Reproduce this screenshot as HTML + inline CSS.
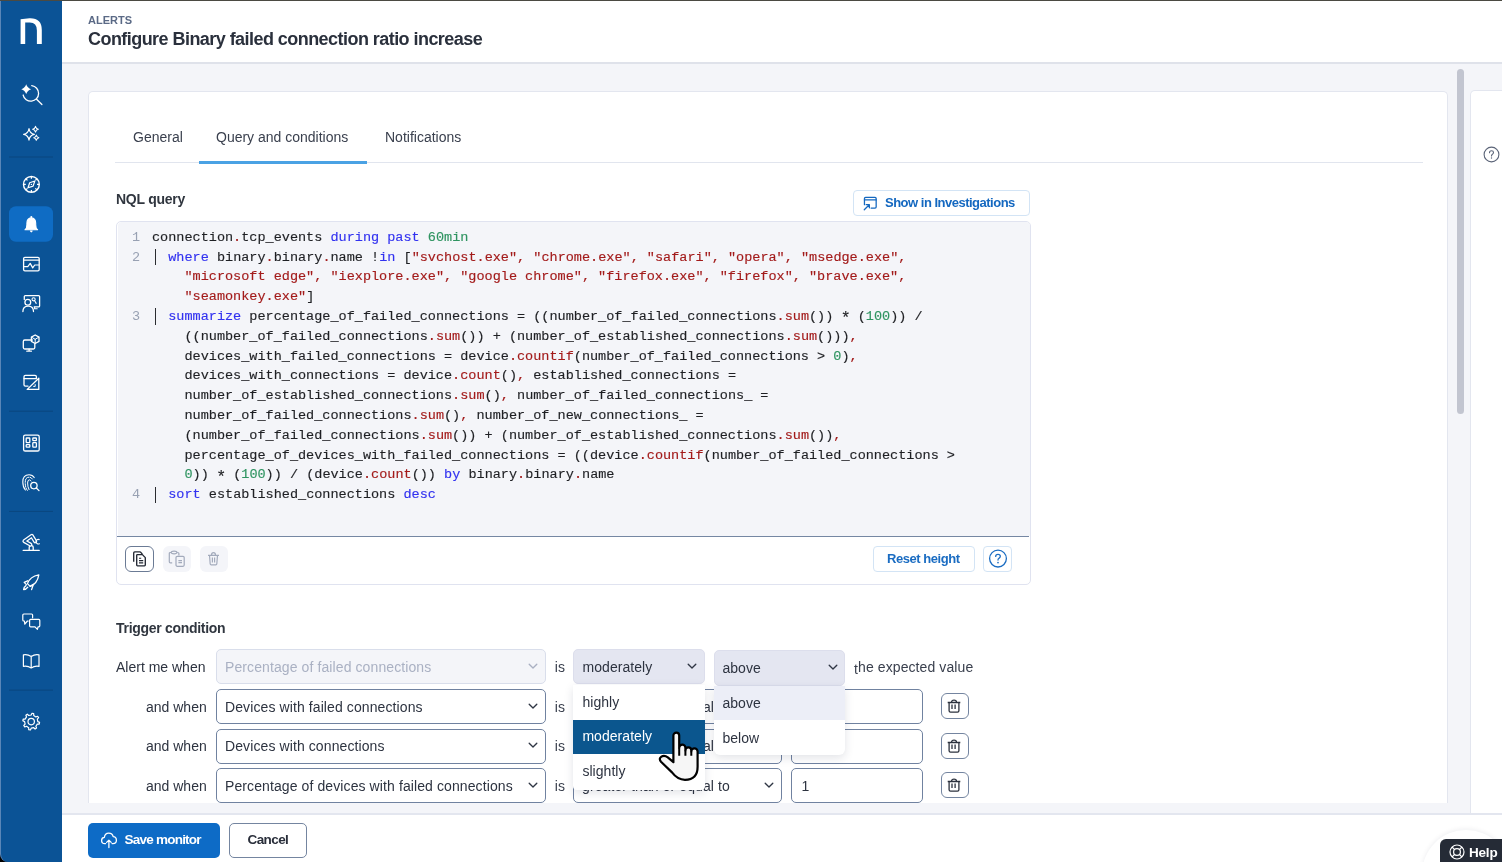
<!DOCTYPE html>
<html><head><meta charset="utf-8">
<style>
*{box-sizing:border-box;margin:0;padding:0}
body{will-change:transform}html,body{width:1502px;height:862px;overflow:hidden;background:#f4f5f9;font-family:"Liberation Sans",sans-serif;color:#222834}
.a{position:absolute}
#top{left:0;top:0;width:1502px;height:1px;background:#4b4a42;z-index:50}
#side{left:0;top:0;width:62px;height:862px;background:#0b5396;border-left:1px solid #5a86b8}
#corner{left:0;top:842px;width:20px;height:20px;background:#000;z-index:1}
#side2{left:0;top:0;width:62px;height:862px;background:#0b5396;border-left:1px solid #5a86b8;border-bottom-left-radius:8px;z-index:2}
#hdr{left:62px;top:1px;width:1440px;height:63px;background:#fff;border-bottom:2px solid #dfe2ea}
.t{white-space:nowrap;position:absolute}
#card{left:88px;top:91px;width:1359.5px;height:712px;background:#fff;border:1px solid #e3e6ef;border-radius:5px;border-bottom:none;border-bottom-left-radius:0;border-bottom-right-radius:0}
#foot{left:62px;top:813px;width:1440px;height:49px;background:#fff;border-top:2px solid #e3e6ef}
#rpanel{left:1470px;top:90px;width:40px;height:724px;background:#fff;border:1px solid #e3e6ef;border-radius:5px 0 0 0;border-bottom:none}
#thumb{left:1457px;top:69px;width:7px;height:345px;background:#c2c5d0;border-radius:4px}
.ln{position:absolute;left:124px;width:16px;text-align:right;font-family:"Liberation Mono",monospace;font-size:13.53px;line-height:19.8px;color:#98a1b3;white-space:pre}
.cl{position:absolute;left:152px;font-family:"Liberation Mono",monospace;font-size:13.53px;line-height:19.8px;color:#1f2024;white-space:pre;-webkit-text-stroke:0.15px currentColor}
.p{display:inline-block;width:8.12px;height:19.8px;position:relative;vertical-align:top}
.p::after{content:"";position:absolute;left:2.8px;top:1.6px;width:1.6px;height:16.4px;background:#2a2c30}
.s{display:inline-block;width:8.12px;text-align:center;position:relative;top:3.6px;left:-0.8px;font-size:16.5px;line-height:10px}
.k{color:#3232f0}.r{color:#a31b1b}.n{color:#2f9461}
</style></head><body>
<div id="top" class="a"></div>
<div id="corner" class="a"></div>
<div id="side2" class="a"></div>

<!-- sidebar icons -->
<svg class="a" style="left:0;top:0;z-index:3" width="62" height="862" viewBox="0 0 62 862" fill="none" stroke="#fff" stroke-width="1.3" stroke-linecap="round" stroke-linejoin="round">
<path d="M20.6 44 V19.3 L29.5 18.2 Q41.8 17.8 41.8 30 V44 H36.9 V30.4 Q36.9 22.4 29.8 22.4 H25.2 V44 Z" fill="#fff" stroke="none"/>
<path d="M31.75 85.66 A7.8 7.8 0 1 1 23.17 95.02" />
<path d="M36.6 99.2 L41.9 104.5"/>
<path d="M26.20 84.30 Q27.38 88.02 31.10 89.20 Q27.38 90.38 26.20 94.10 Q25.02 90.38 21.30 89.20 Q25.02 88.02 26.20 84.30 Z" fill="#fff" stroke="none"/>
<path d="M29.00 128.60 Q29.76 133.59 34.40 134.40 Q29.76 135.21 29.00 140.20 Q28.24 135.21 23.60 134.40 Q28.24 133.59 29.00 128.60 Z" stroke-width="1.15"/>
<path d="M35.50 126.30 Q36.02 128.68 38.40 129.20 Q36.02 129.72 35.50 132.10 Q34.98 129.72 32.60 129.20 Q34.98 128.68 35.50 126.30 Z" stroke-width="1.05"/>
<path d="M36.30 135.10 Q36.77 137.23 38.90 137.70 Q36.77 138.17 36.30 140.30 Q35.83 138.17 33.70 137.70 Q35.83 137.23 36.30 135.10 Z" stroke-width="1.05"/>
<line x1="9" y1="157" x2="53" y2="157" stroke="#0a467f" stroke-width="1" stroke-linecap="butt"/>
<circle cx="31.4" cy="184.4" r="7.9" stroke-width="1.4"/>
<path d="M39.00 184.40 L37.00 184.40 M36.77 189.77 L35.36 188.36 M31.40 192.00 L31.40 190.00 M26.03 189.77 L27.44 188.36 M23.80 184.40 L25.80 184.40 M26.03 179.03 L27.44 180.44 M31.40 176.80 L31.40 178.80 M36.77 179.03 L35.36 180.44 " stroke-width="1.2" stroke-linecap="butt"/>
<path d="M34.8 181 L33.1 186.1 L28 187.8 L29.7 182.7 Z" stroke-width="1.2"/>
<circle cx="31.4" cy="184.4" r="0.7" fill="#fff" stroke="none"/>
<rect x="9" y="206.3" width="44" height="35.5" rx="7" fill="#0f6cc4" stroke="none"/>
<path d="M25 229.8 Q26.9 228.6 26.9 224.8 V223.2 Q26.9 218.4 31.3 217.9 Q35.7 218.4 35.7 223.2 V224.8 Q35.7 228.6 37.6 229.8 Z" fill="#fff" stroke="#fff" stroke-width="1.1"/>
<circle cx="31.3" cy="217" r="1" fill="#fff" stroke="none"/>
<path d="M29.9 230.6 Q29.9 232.4 31.3 232.4 Q32.7 232.4 32.7 230.6 Z" fill="#fff" stroke="none"/>
<rect x="23.6" y="257.3" width="15.6" height="13.6" rx="1.3"/>
<path d="M23.6 260.2 H39.2"/>
<path d="M24.4 266.6 H27.8 L30.2 263.4 L32.7 267.9 L34.7 265 H38.8" stroke-width="1.2"/>
<path d="M24.3 299.4 V296.6 Q24.3 295.6 25.3 295.6 H38.6 Q39.6 295.6 39.6 296.6 V305.9 Q39.6 306.9 38.6 306.9 H34.2"/>
<circle cx="27.8" cy="302.3" r="2.9" fill="#0b5396"/>
<path d="M22.9 311.6 Q22.9 306.2 28.2 306.2 Q33.5 306.2 33.5 311.6" fill="#0b5396"/>
<circle cx="33.6" cy="299.3" r="1.6" stroke-width="1.1"/>
<path d="M34.6 300.7 L36.2 303.4" stroke-width="1.1"/>
<path d="M34.6 307.4 V308.8 H37.2" stroke-width="1.1"/>
<path d="M32.4 340 H24.8 Q23.3 340 23.3 341.5 V347.5 Q23.3 349 24.8 349 H33.4 Q34.8 349 34.8 347.5 V344" />
<path d="M26.8 351.2 H31.4 M29.1 349.2 V351.2"/>
<path d="M35.2 335 L39 337.1 V341.4 L35.2 343.5 L31.4 341.4 V337.1 Z" />
<path d="M31.6 337.2 L35.2 339.3 L38.8 337.2 M35.2 339.3 V343.3" stroke-width="1"/>
<path d="M28 386.2 H25.4 Q24 386.2 24 384.8 V376.8 Q24 375.4 25.4 375.4 H35 Q36.4 375.4 36.4 376.8 V378"/>
<path d="M24 378.6 H36.4"/>
<path d="M27.2 389.4 L38.8 378.2 V389.4 Z"/>
<path d="M35.2 384.6 V386.4 H33.6" stroke-width="1"/>
<line x1="9" y1="411.2" x2="53" y2="411.2" stroke="#0a467f" stroke-width="1" stroke-linecap="butt"/>
<rect x="23.6" y="435.2" width="15.6" height="15.8" rx="1.6"/>
<rect x="26.2" y="438" width="3.6" height="4.6" rx="0.6"/>
<rect x="32.8" y="438" width="3.6" height="2.6" rx="0.6"/>
<rect x="26.2" y="444.6" width="3.6" height="2.6" rx="0.6"/>
<rect x="32.8" y="442.6" width="3.6" height="4.6" rx="0.6"/>
<path d="M25.4 490 Q22.8 487 22.8 482 Q22.8 474.8 29 474.8 Q32.6 474.8 34.2 477.6" stroke-width="1.1"/>
<path d="M27.3 490.4 Q25.2 487.6 25.2 482.4 Q25.2 477.2 29 477.2 Q31.2 477.2 32.4 479" stroke-width="1" stroke-dasharray="3 1.2"/>
<path d="M29 489.6 Q27.6 487 27.6 483 Q27.6 479.8 29.4 479.8 Q30.4 479.8 31 481" stroke-width="1"/>
<circle cx="33.9" cy="485.6" r="3.2" fill="#0b5396"/>
<path d="M36.3 488 L39 490.6"/>
<line x1="9" y1="511.4" x2="53" y2="511.4" stroke="#0a467f" stroke-width="1" stroke-linecap="butt"/>
<path d="M23.2 550.4 H39.2"/>
<path d="M29.2 550.2 V547.4 Q29.2 545.6 31.2 545.6 Q33.2 545.6 33.2 547.4 V550.2"/>
<path d="M30.4 544.6 L24.4 541.2 L31.8 535.8 L35.2 541.4" stroke-width="4" stroke-linecap="round" stroke-linejoin="round"/>
<path d="M30.4 544.6 L24.4 541.2 L31.8 535.8 L35.2 541.4" stroke="#0b5396" stroke-width="1.5" stroke-linecap="round" stroke-linejoin="round"/>
<path d="M36 541.4 Q36.6 538.8 39.2 539.6 M36 542 Q37 544.8 39.4 543.8" stroke-width="1.1"/>
<path d="M27.4 583.6 Q30 576.4 38.8 574.8 Q37.4 583.4 30.2 586.4 Z"/>
<path d="M27.6 580.8 L24.2 582.4 L26.4 584.6 M30.2 586.4 L33.4 584.2 L31.6 589.6"/>
<path d="M26 585.6 Q23.6 587 23.6 589.6 Q26.2 589.6 27.8 587.2"/>
<path d="M32.6 617.8 V615 Q32.6 614 31.6 614 H23.8 Q22.8 614 22.8 615 V620 Q22.8 621 23.8 621 H24.4 L24.8 624.2 L27.4 621 H28.2" stroke-width="1.2"/>
<path d="M30.6 619.4 H38.8 Q39.8 619.4 39.8 620.4 V625.8 Q39.8 626.8 38.8 626.8 H38 L37.4 629.4 L35 626.8 H30.6 Q29.6 626.8 29.6 625.8 V620.4 Q29.6 619.4 30.6 619.4 Z" stroke-width="1.2"/>
<path d="M31.2 668 Q27.6 665.6 23.4 666.4 V654.8 Q27.6 654 31.2 656.4 Q34.8 654 39 654.8 V666.4 Q34.8 665.6 31.2 668 Z M31.2 656.4 V668" stroke-width="1.2"/>
<line x1="9" y1="690.1" x2="53" y2="690.1" stroke="#0a467f" stroke-width="1" stroke-linecap="butt"/>
<path d="M37.80 721.60 L39.56 722.39 L39.23 724.07 L37.30 724.13 L35.87 726.27 L36.55 728.07 L35.13 729.02 L33.73 727.70 L31.20 728.20 L30.41 729.96 L28.73 729.63 L28.67 727.70 L26.53 726.27 L24.73 726.95 L23.78 725.53 L25.10 724.13 L24.60 721.60 L22.84 720.81 L23.17 719.13 L25.10 719.07 L26.53 716.93 L25.85 715.13 L27.27 714.18 L28.67 715.50 L31.20 715.00 L31.99 713.24 L33.67 713.57 L33.73 715.50 L35.87 716.93 L37.67 716.25 L38.62 717.67 L37.30 719.07 Z" stroke-width="1.2"/>
<circle cx="31.2" cy="721.6" r="3.2" stroke-width="1.2"/>
</svg>
<div id="hdr" class="a"></div>
<div class="t" style="left:88px;top:13px;font-size:11px;font-weight:bold;color:#5b6a86;letter-spacing:0px;line-height:14px">ALERTS</div>
<div class="t" style="left:88px;top:28px;font-size:18px;font-weight:bold;color:#2a303c;letter-spacing:-0.55px;line-height:22px">Configure Binary failed connection ratio increase</div>
<div id="card" class="a"></div>
<div id="rpanel" class="a"></div>
<div id="thumb" class="a"></div>
<div id="foot" class="a"></div>

<div class="t" style="left:133px;top:129.9px;font-size:14px;line-height:1;color:#3a404e">General</div>
<div class="t" style="left:216px;top:129.9px;font-size:14px;line-height:1;color:#3a404e">Query and conditions</div>
<div class="t" style="left:385px;top:129.9px;font-size:14px;line-height:1;color:#3a404e">Notifications</div>
<div class="a" style="left:115px;top:162px;width:1308px;height:1px;background:#e1e5ee"></div>
<div class="a" style="left:199px;top:161px;width:168px;height:3px;background:#4aa2e4"></div>
<div class="t" style="left:116px;top:192.1px;font-size:14px;line-height:1;font-weight:bold;color:#30363f;letter-spacing:-0.25px">NQL query</div>
<div class="a" style="left:853px;top:190px;width:177px;height:26px;border:1px solid #d3e4f5;border-radius:4px;background:#fff"></div>
<svg class="a" style="left:861.6px;top:194.8px" width="17" height="17" viewBox="0 0 18 18" fill="none" stroke="#1468c0" stroke-width="1.35" stroke-linecap="round" stroke-linejoin="round">
<path d="M2.6 10.2 V3.6 Q2.6 2.4 3.8 2.4 H13.8 Q15 2.4 15 3.6 V12.6 Q15 13.8 13.8 13.8 H9.6"/>
<path d="M2.6 5.2 H15"/>
<path d="M2.4 15.6 L7.4 10.6 M4.4 10.2 H7.8 V13.6"/>
</svg>
<div class="t" style="left:885px;top:196.2px;font-size:13px;line-height:1;font-weight:bold;color:#1468c0;letter-spacing:-0.5px">Show in Investigations</div>


<div class="a" style="left:116px;top:220.5px;width:915px;height:364.5px;border:1.5px solid #e0e3f0;border-radius:5px;background:#fff"></div>
<div class="a" style="left:117.5px;top:222px;width:912px;height:314px;background:#f4f5f9;border-radius:4px 4px 0 0"></div>
<div class="a" style="left:117px;top:535.5px;width:912px;height:1.5px;background:#7587a3"></div>
<div class="ln" style="top:227.70px">1</div>
<div class="cl" style="top:227.70px">connection<span class="r">.</span>tcp_events <span class="k">during</span> <span class="k">past</span> <span class="n">60min</span></div>
<div class="ln" style="top:247.50px">2</div>
<div class="cl" style="top:247.50px"><span class="p"></span> <span class="k">where</span> binary<span class="r">.</span>binary<span class="r">.</span>name !<span class="k">in</span> [<span class="r">"svchost.exe", "chrome.exe", "safari", "opera", "msedge.exe",</span></div>
<div class="cl" style="top:267.30px">    <span class="r">"microsoft edge", "iexplore.exe", "google chrome", "firefox.exe", "firefox", "brave.exe",</span></div>
<div class="cl" style="top:287.10px">    <span class="r">"seamonkey.exe"</span>]</div>
<div class="ln" style="top:306.90px">3</div>
<div class="cl" style="top:306.90px"><span class="p"></span> <span class="k">summarize</span> percentage_of_failed_connections = ((number_of_failed_connections<span class="r">.sum</span>()) <span class="s">*</span> (<span class="n">100</span>)) /</div>
<div class="cl" style="top:326.70px">    ((number_of_failed_connections<span class="r">.sum</span>()) + (number_of_established_connections<span class="r">.sum</span>()))<span class="r">,</span></div>
<div class="cl" style="top:346.50px">    devices_with_failed_connections = device<span class="r">.countif</span>(number_of_failed_connections &gt; <span class="n">0</span>)<span class="r">,</span></div>
<div class="cl" style="top:366.30px">    devices_with_connections = device<span class="r">.count</span>()<span class="r">,</span> established_connections =</div>
<div class="cl" style="top:386.10px">    number_of_established_connections<span class="r">.sum</span>()<span class="r">,</span> number_of_failed_connections_ =</div>
<div class="cl" style="top:405.90px">    number_of_failed_connections<span class="r">.sum</span>()<span class="r">,</span> number_of_new_connections_ =</div>
<div class="cl" style="top:425.70px">    (number_of_failed_connections<span class="r">.sum</span>()) + (number_of_established_connections<span class="r">.sum</span>())<span class="r">,</span></div>
<div class="cl" style="top:445.50px">    percentage_of_devices_with_failed_connections = ((device<span class="r">.countif</span>(number_of_failed_connections &gt;</div>
<div class="cl" style="top:465.30px">    <span class="n">0</span>)) <span class="s">*</span> (<span class="n">100</span>)) / (device<span class="r">.count</span>()) <span class="k">by</span> binary<span class="r">.</span>binary<span class="r">.</span>name</div>
<div class="ln" style="top:485.10px">4</div>
<div class="cl" style="top:485.10px"><span class="p"></span> <span class="k">sort</span> established_connections <span class="k">desc</span></div>

<!-- toolbar -->
<div class="a" style="left:125px;top:546px;width:29px;height:26px;border:1.5px solid #6b7b95;border-radius:6px;background:#fff"></div>
<svg class="a" style="left:131px;top:550px" width="18" height="18" viewBox="0 0 18 18" fill="none" stroke="#232833" stroke-width="1.35" stroke-linejoin="round">
<path d="M2.7 11.8 V2.9 Q2.7 1.9 3.7 1.9 H8.6 Q9.6 1.9 10.3 2.9 L11.4 4.3"/>
<path d="M5.7 5.2 Q5.7 4.6 6.4 4.6 H11.4 L14.3 7.6 V15 Q14.3 15.8 13.5 15.8 H6.5 Q5.7 15.8 5.7 15 Z" fill="#fff"/>
<path d="M8 8.2 H10.2 M8 10.6 H12.2 M8 12.9 H12.2" stroke-width="1.1"/>
</svg>
<div class="a" style="left:163px;top:546px;width:28px;height:26px;border-radius:6px;background:#f4f5f9"></div>
<svg class="a" style="left:168px;top:550px" width="18" height="18" viewBox="0 0 18 18" fill="none" stroke="#a3abbc" stroke-width="1.2" stroke-linejoin="round">
<path d="M4.2 12.9 H2.4 Q1.3 12.9 1.3 11.8 V3.6 Q1.3 2.5 2.4 2.5 H3"/>
<path d="M9.2 2.5 H9.8 Q10.9 2.5 10.9 3.6 V5.4"/>
<path d="M3.2 2.6 Q3.2 1.2 6.1 1.2 Q9 1.2 9 2.6 Q9 3.8 6.1 3.8 Q3.2 3.8 3.2 2.6 Z"/>
<rect x="8" y="6.4" width="8.2" height="9.9" rx="1.2" fill="#f4f5f9"/>
<path d="M10.4 10.6 H14 M10.4 12.6 H14"/>
</svg>
<div class="a" style="left:200px;top:546px;width:28px;height:26px;border-radius:6px;background:#f4f5f9"></div>
<svg class="a" style="left:205px;top:550px" width="18" height="18" viewBox="0 0 18 18" fill="none" stroke="#a3abbc" stroke-width="1.2" stroke-linejoin="round">
<path d="M3 5.3 H14 M6.5 5.3 Q6.5 2.6 8.5 2.6 Q10.5 2.6 10.5 5.3 M4.5 5.3 L5.2 14 Q5.3 14.9 6.2 14.9 H10.8 Q11.7 14.9 11.8 14 L12.5 5.3 M7.4 7.4 V12.6 M9.6 7.4 V12.6"/>
</svg>
<div class="a" style="left:873px;top:546px;width:102px;height:26px;border:1px solid #d3e4f5;border-radius:4px;background:#fff"></div>
<div class="t" style="left:887px;top:551.8px;font-size:13px;line-height:1;font-weight:bold;color:#1a6cc2;letter-spacing:-0.45px">Reset height</div>
<div class="a" style="left:983px;top:546px;width:29px;height:26px;border:1px solid #d3e4f5;border-radius:4px;background:#fff"></div>
<svg class="a" style="left:987px;top:548px" width="22" height="22" viewBox="0 0 22 22">
<circle cx="11" cy="10.6" r="8.4" fill="none" stroke="#1a6cc2" stroke-width="1.3"/>
<path d="M8.7 8.4 Q8.7 6.3 11 6.3 Q13.3 6.3 13.3 8.3 Q13.3 9.6 11.9 10.3 Q11 10.8 11 12.1" fill="none" stroke="#1a6cc2" stroke-width="1.3" stroke-linecap="round"/>
<circle cx="11" cy="14.6" r="0.85" fill="#1a6cc2"/>
</svg>

<!-- trigger -->
<div class="t" style="left:116.0px;top:620.55px;font-size:14px;line-height:1;color:#30363f;font-weight:bold;letter-spacing:-0.3px;">Trigger condition</div>
<div class="t" style="left:116.0px;top:659.65px;font-size:14px;line-height:1;color:#2d3340;">Alert me when</div>
<div class="a" style="left:215.5px;top:649px;width:330px;height:35px;border:1px solid #d9deeb;border-radius:5px;background:#f4f5f9"></div>
<div class="t" style="left:225.0px;top:659.65px;font-size:14px;line-height:1;color:#aab1c3;letter-spacing:0.1px;">Percentage of failed connections</div>
<svg class="a" style="left:528.0px;top:662.5px" width="10" height="7" viewBox="0 0 10 7"><path d="M1.2 1.3 L5 5.1 L8.8 1.3" fill="none" stroke="#a9b0c2" stroke-width="1.35" stroke-linecap="round" stroke-linejoin="round"/></svg>
<div class="t" style="left:146.0px;top:699.65px;font-size:14px;line-height:1;color:#2d3340;">and when</div>
<div class="a" style="left:215.5px;top:689.0px;width:330px;height:35px;border:1.5px solid #7082a0;border-radius:5px;background:#fff"></div>
<div class="t" style="left:225.0px;top:699.65px;font-size:14px;line-height:1;color:#2d3340;letter-spacing:0.1px;">Devices with failed connections</div>
<svg class="a" style="left:528.0px;top:702.5px" width="10" height="7" viewBox="0 0 10 7"><path d="M1.2 1.3 L5 5.1 L8.8 1.3" fill="none" stroke="#2f3644" stroke-width="1.35" stroke-linecap="round" stroke-linejoin="round"/></svg>
<div class="t" style="left:146.0px;top:739.15px;font-size:14px;line-height:1;color:#2d3340;">and when</div>
<div class="a" style="left:215.5px;top:728.5px;width:330px;height:35px;border:1.5px solid #7082a0;border-radius:5px;background:#fff"></div>
<div class="t" style="left:225.0px;top:739.15px;font-size:14px;line-height:1;color:#2d3340;letter-spacing:0.1px;">Devices with connections</div>
<svg class="a" style="left:528.0px;top:742.0px" width="10" height="7" viewBox="0 0 10 7"><path d="M1.2 1.3 L5 5.1 L8.8 1.3" fill="none" stroke="#2f3644" stroke-width="1.35" stroke-linecap="round" stroke-linejoin="round"/></svg>
<div class="t" style="left:146.0px;top:778.65px;font-size:14px;line-height:1;color:#2d3340;">and when</div>
<div class="a" style="left:215.5px;top:768.0px;width:330px;height:35px;border:1.5px solid #7082a0;border-radius:5px;background:#fff"></div>
<div class="t" style="left:225.0px;top:778.65px;font-size:14px;line-height:1;color:#2d3340;letter-spacing:0.1px;">Percentage of devices with failed connections</div>
<svg class="a" style="left:528.0px;top:781.5px" width="10" height="7" viewBox="0 0 10 7"><path d="M1.2 1.3 L5 5.1 L8.8 1.3" fill="none" stroke="#2f3644" stroke-width="1.35" stroke-linecap="round" stroke-linejoin="round"/></svg>
<div class="t" style="left:554.8px;top:659.65px;font-size:14px;line-height:1;color:#3a404e;">is</div>
<div class="t" style="left:554.8px;top:699.65px;font-size:14px;line-height:1;color:#3a404e;">is</div>
<div class="t" style="left:554.8px;top:739.15px;font-size:14px;line-height:1;color:#3a404e;">is</div>
<div class="t" style="left:554.8px;top:778.65px;font-size:14px;line-height:1;color:#3a404e;">is</div>
<div class="a" style="left:573px;top:689.0px;width:208.5px;height:35px;border:1.5px solid #7082a0;border-radius:5px;background:#fff"></div>
<div class="t" style="left:582.0px;top:699.65px;font-size:14px;line-height:1;color:#2d3340;letter-spacing:0.1px;">greater than or equal to</div>
<svg class="a" style="left:764.0px;top:702.5px" width="10" height="7" viewBox="0 0 10 7"><path d="M1.2 1.3 L5 5.1 L8.8 1.3" fill="none" stroke="#2f3644" stroke-width="1.35" stroke-linecap="round" stroke-linejoin="round"/></svg>
<div class="a" style="left:790.5px;top:689.0px;width:132px;height:35px;border:1.5px solid #7082a0;border-radius:5px;background:#fff"></div>
<div class="a" style="left:940.5px;top:693.0px;width:28.5px;height:26px;border:1.5px solid #7485a0;border-radius:6px;background:#fff"></div><svg class="a" style="left:945px;top:698.0px" width="18" height="18" viewBox="0 0 18 18" fill="none" stroke="#2c323e" stroke-width="1.3" stroke-linejoin="round"><path d="M3.2 4.5 H15.8 M7 4.3 Q7 2.2 9.5 2.2 Q12 2.2 12 4.3 M4.6 4.7 V12.8 Q4.6 14.2 6 14.2 H13 Q14.4 14.2 14.4 12.8 V4.7 M7.5 6.6 V11 M10.6 6.6 V11" transform="translate(-0.5,0)"/></svg>
<div class="a" style="left:573px;top:728.5px;width:208.5px;height:35px;border:1.5px solid #7082a0;border-radius:5px;background:#fff"></div>
<div class="t" style="left:582.0px;top:739.15px;font-size:14px;line-height:1;color:#2d3340;letter-spacing:0.1px;">greater than or equal to</div>
<svg class="a" style="left:764.0px;top:742.0px" width="10" height="7" viewBox="0 0 10 7"><path d="M1.2 1.3 L5 5.1 L8.8 1.3" fill="none" stroke="#2f3644" stroke-width="1.35" stroke-linecap="round" stroke-linejoin="round"/></svg>
<div class="a" style="left:790.5px;top:728.5px;width:132px;height:35px;border:1.5px solid #7082a0;border-radius:5px;background:#fff"></div>
<div class="a" style="left:940.5px;top:732.5px;width:28.5px;height:26px;border:1.5px solid #7485a0;border-radius:6px;background:#fff"></div><svg class="a" style="left:945px;top:737.5px" width="18" height="18" viewBox="0 0 18 18" fill="none" stroke="#2c323e" stroke-width="1.3" stroke-linejoin="round"><path d="M3.2 4.5 H15.8 M7 4.3 Q7 2.2 9.5 2.2 Q12 2.2 12 4.3 M4.6 4.7 V12.8 Q4.6 14.2 6 14.2 H13 Q14.4 14.2 14.4 12.8 V4.7 M7.5 6.6 V11 M10.6 6.6 V11" transform="translate(-0.5,0)"/></svg>
<div class="a" style="left:573px;top:768.0px;width:208.5px;height:35px;border:1.5px solid #7082a0;border-radius:5px;background:#fff"></div>
<div class="t" style="left:582.0px;top:778.65px;font-size:14px;line-height:1;color:#2d3340;letter-spacing:0.1px;">greater than or equal to</div>
<svg class="a" style="left:764.0px;top:781.5px" width="10" height="7" viewBox="0 0 10 7"><path d="M1.2 1.3 L5 5.1 L8.8 1.3" fill="none" stroke="#2f3644" stroke-width="1.35" stroke-linecap="round" stroke-linejoin="round"/></svg>
<div class="a" style="left:790.5px;top:768.0px;width:132px;height:35px;border:1.5px solid #7082a0;border-radius:5px;background:#fff"></div>
<div class="a" style="left:940.5px;top:772.0px;width:28.5px;height:26px;border:1.5px solid #7485a0;border-radius:6px;background:#fff"></div><svg class="a" style="left:945px;top:777.0px" width="18" height="18" viewBox="0 0 18 18" fill="none" stroke="#2c323e" stroke-width="1.3" stroke-linejoin="round"><path d="M3.2 4.5 H15.8 M7 4.3 Q7 2.2 9.5 2.2 Q12 2.2 12 4.3 M4.6 4.7 V12.8 Q4.6 14.2 6 14.2 H13 Q14.4 14.2 14.4 12.8 V4.7 M7.5 6.6 V11 M10.6 6.6 V11" transform="translate(-0.5,0)"/></svg>
<div class="t" style="left:801.5px;top:778.65px;font-size:14px;line-height:1;color:#2d3340;">1</div>
<div class="a" style="left:573.3px;top:649px;width:131.5px;height:35px;border-radius:5px;background:#e4e6f1;border:1.5px solid #dcdeec"></div>
<div class="t" style="left:582.5px;top:659.75px;font-size:14px;line-height:1;color:#2d3340;letter-spacing:0.05px;">moderately</div>
<svg class="a" style="left:687.0px;top:663.0px" width="10" height="7" viewBox="0 0 10 7"><path d="M1.2 1.3 L5 5.1 L8.8 1.3" fill="none" stroke="#2f3644" stroke-width="1.35" stroke-linecap="round" stroke-linejoin="round"/></svg>
<div class="a" style="left:713.5px;top:650.4px;width:131px;height:35.4px;border-radius:5px;background:#e4e6f1;border:1.5px solid #dcdeec"></div>
<div class="t" style="left:722.4px;top:660.55px;font-size:14px;line-height:1;color:#2d3340;letter-spacing:0.05px;">above</div>
<svg class="a" style="left:828.0px;top:664.0px" width="10" height="7" viewBox="0 0 10 7"><path d="M1.2 1.3 L5 5.1 L8.8 1.3" fill="none" stroke="#2f3644" stroke-width="1.35" stroke-linecap="round" stroke-linejoin="round"/></svg>
<div class="t" style="left:854.0px;top:660.15px;font-size:14px;line-height:1;color:#3a404e;letter-spacing:0.1px;"><span style="position:relative;top:1.6px">t</span>he expected value</div>
<div class="a" style="left:573px;top:685px;width:132px;height:104.6px;background:#fff;border-radius:0 0 4px 4px;box-shadow:0 3px 10px rgba(30,40,70,0.13)"></div>
<div class="a" style="left:573px;top:719.5px;width:132px;height:34.6px;background:#0b568e"></div>
<div class="t" style="left:582.4px;top:695.35px;font-size:14px;line-height:1;color:#2d3340;letter-spacing:0.05px;">highly</div>
<div class="t" style="left:582.4px;top:729.45px;font-size:14px;line-height:1;color:#ffffff;letter-spacing:0.05px;">moderately</div>
<div class="t" style="left:582.4px;top:764.25px;font-size:14px;line-height:1;color:#2d3340;letter-spacing:0.05px;">slightly</div>
<div class="a" style="left:713.5px;top:685.6px;width:131px;height:69.9px;background:#fff;border-radius:0 0 6px 6px;box-shadow:0 3px 10px rgba(30,40,70,0.13);overflow:hidden"><div style="position:absolute;left:0;top:0;width:131px;height:34.3px;background:#eceef7"></div></div>
<div class="t" style="left:722.4px;top:696.05px;font-size:14px;line-height:1;color:#2d3340;letter-spacing:0.05px;">above</div>
<div class="t" style="left:722.4px;top:731.05px;font-size:14px;line-height:1;color:#2d3340;letter-spacing:0.05px;">below</div>

<!-- footer -->
<div class="a" style="left:88px;top:823px;width:131.5px;height:34.5px;background:#0d6bc6;border-radius:5px"></div>
<svg class="a" style="left:100px;top:831px" width="18" height="18" viewBox="0 0 18 18" fill="none" stroke="#fff" stroke-width="1.3" stroke-linecap="round" stroke-linejoin="round">
<path d="M5.6 12.6 H4.8 Q1.6 12.6 1.6 9.4 Q1.6 6.6 4.4 6.3 Q4.8 2.2 8.8 2.2 Q12.4 2.2 13.2 5.6 Q16.4 5.8 16.4 9.2 Q16.4 12.6 13 12.6 H12"/>
<path d="M8.9 16.6 V9.2 M6.6 11.4 L8.9 9.1 L11.2 11.4"/>
</svg>
<div class="t" style="left:124.6px;top:833.3px;font-size:13.5px;line-height:1;font-weight:bold;color:#fff;letter-spacing:-0.78px">Save monitor</div>
<div class="a" style="left:229px;top:823px;width:77.5px;height:34.5px;background:#fff;border:1.5px solid #7485a0;border-radius:5px"></div>
<div class="t" style="left:247.6px;top:833.3px;font-size:13.5px;line-height:1;font-weight:bold;color:#2a2f3b;letter-spacing:-0.62px">Cancel</div>
<!-- help -->
<div class="a" style="left:1422px;top:829.5px;width:88px;height:88px;border-radius:50%;background:#fff;box-shadow:0 -1px 5px rgba(20,30,60,0.07)"></div>
<div class="a" style="left:1439.5px;top:839px;width:70px;height:30px;background:#252b36;border-radius:6px"></div>
<svg class="a" style="left:1448px;top:842px" width="18" height="18" viewBox="0 0 18 18" fill="none" stroke="#fff" stroke-width="1.2">
<circle cx="9" cy="10" r="7"/><circle cx="9" cy="10" r="3.4"/>
<path d="M4 5 L6.6 7.6 M14 5 L11.4 7.6 M4 15 L6.6 12.4 M14 15 L11.4 12.4"/>
</svg>
<div class="t" style="left:1469px;top:846.1px;font-size:13.5px;line-height:1;font-weight:bold;color:#fff;letter-spacing:-0.2px">Help</div>
<!-- right panel help icon -->
<svg class="a" style="left:1483px;top:146px" width="17" height="17" viewBox="0 0 17 17" fill="none" stroke="#5b6478" stroke-width="1.1">
<circle cx="8.5" cy="8.5" r="7.4"/>
<path d="M6.5 6.8 Q6.5 4.8 8.5 4.8 Q10.5 4.8 10.5 6.6 Q10.5 7.8 9.2 8.4 Q8.5 8.8 8.5 9.9" stroke-linecap="round"/>
<circle cx="8.5" cy="12" r="0.7" fill="#5b6478" stroke="none"/>
</svg>


<!-- hand cursor -->
<svg class="a" style="left:650px;top:725px;z-index:20" width="60" height="60" viewBox="0 0 60 60">
<path d="M23.4 37.2 V10.6 A2.9 2.9 0 0 1 29.2 10.6 V22.8 A3.1 3.1 0 0 1 35.4 22.8 V25.4 A2.95 2.95 0 0 1 41.3 25.4 V26.5 A3.15 3.15 0 0 1 47.6 26.5 V41.8 Q47.6 54.8 35 54.8 Q27.6 54.8 22 47.4 L11 36.8 Q8.4 33.6 11.4 31.6 Q14.4 29.8 17.8 32.4 L23.4 37.2 Z" fill="#f6f6f6" stroke="#000" stroke-width="2.2" stroke-linejoin="round"/>
<path d="M29.2 22.8 V30.8 M35.4 25.4 V30.8 M41.3 26.5 V30.8" stroke="#000" stroke-width="2" fill="none"/>
</svg>

</body></html>
